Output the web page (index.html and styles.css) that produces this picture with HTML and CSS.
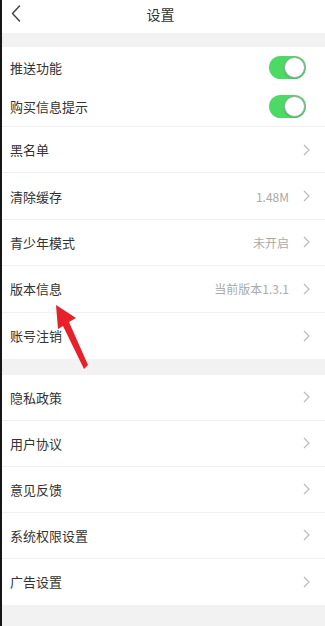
FILE: index.html
```html
<!DOCTYPE html>
<html lang="zh-CN">
<head>
<meta charset="utf-8">
<title>设置</title>
<link rel="stylesheet" href="styles.css">
</head>
<body>
<div class="page">
  <header class="nav">
    <svg class="back" width="10" height="17" viewBox="0 0 10 17"><path d="M8.5 1 L1.5 8.5 L8.5 16" fill="none" stroke="#444" stroke-width="1.5" stroke-linecap="round" stroke-linejoin="round"/></svg>
    <div class="title">设置</div>
  </header>
  <div class="gap gap-top"></div>
  <section class="group">
    <div class="row row-toggle"><span class="label">推送功能</span><span class="switch"><span class="knob"></span></span></div>
    <div class="row row-toggle row-last-toggle"><span class="label">购买信息提示</span><span class="switch"><span class="knob"></span></span></div>
    <div class="row"><span class="label">黑名单</span><span class="right"><svg class="chev" width="7" height="12" viewBox="0 0 7 12"><path d="M1 1 L6 6 L1 11" fill="none" stroke="#bbb" stroke-width="1.2"/></svg></span></div>
    <div class="row"><span class="label">清除缓存</span><span class="right"><span class="value">1.48M</span><svg class="chev" width="7" height="12" viewBox="0 0 7 12"><path d="M1 1 L6 6 L1 11" fill="none" stroke="#bbb" stroke-width="1.2"/></svg></span></div>
    <div class="row"><span class="label">青少年模式</span><span class="right"><span class="value">未开启</span><svg class="chev" width="7" height="12" viewBox="0 0 7 12"><path d="M1 1 L6 6 L1 11" fill="none" stroke="#bbb" stroke-width="1.2"/></svg></span></div>
    <div class="row"><span class="label">版本信息</span><span class="right"><span class="value">当前版本1.3.1</span><svg class="chev" width="7" height="12" viewBox="0 0 7 12"><path d="M1 1 L6 6 L1 11" fill="none" stroke="#bbb" stroke-width="1.2"/></svg></span></div>
    <div class="row row-end"><span class="label">账号注销</span><span class="right"><svg class="chev" width="7" height="12" viewBox="0 0 7 12"><path d="M1 1 L6 6 L1 11" fill="none" stroke="#bbb" stroke-width="1.2"/></svg></span></div>
  </section>
  <div class="gap gap-mid"></div>
  <section class="group">
    <div class="row row2"><span class="label">隐私政策</span><span class="right"><svg class="chev" width="7" height="12" viewBox="0 0 7 12"><path d="M1 1 L6 6 L1 11" fill="none" stroke="#bbb" stroke-width="1.2"/></svg></span></div>
    <div class="row row2"><span class="label">用户协议</span><span class="right"><svg class="chev" width="7" height="12" viewBox="0 0 7 12"><path d="M1 1 L6 6 L1 11" fill="none" stroke="#bbb" stroke-width="1.2"/></svg></span></div>
    <div class="row row2"><span class="label">意见反馈</span><span class="right"><svg class="chev" width="7" height="12" viewBox="0 0 7 12"><path d="M1 1 L6 6 L1 11" fill="none" stroke="#bbb" stroke-width="1.2"/></svg></span></div>
    <div class="row row2"><span class="label">系统权限设置</span><span class="right"><svg class="chev" width="7" height="12" viewBox="0 0 7 12"><path d="M1 1 L6 6 L1 11" fill="none" stroke="#bbb" stroke-width="1.2"/></svg></span></div>
    <div class="row row2 row-end"><span class="label">广告设置</span><span class="right"><svg class="chev" width="7" height="12" viewBox="0 0 7 12"><path d="M1 1 L6 6 L1 11" fill="none" stroke="#bbb" stroke-width="1.2"/></svg></span></div>
  </section>
  <div class="gap gap-bottom"></div>
  <svg class="arrow" width="325" height="626" viewBox="0 0 325 626"><polygon points="56,305 76,318 69,322 88,365 84,369 63,326 58,329" fill="#e8202a"/></svg>
</div>
</body>
</html>
```
FILE: styles.css
```css
html, body {
  margin: 0;
  padding: 0;
  background: #fff;
}
body {
  font-family: "Noto Sans CJK SC", "Noto Sans", sans-serif;
  color: #333;
}
.page {
  position: relative;
  width: 325px;
  height: 626px;
  overflow: hidden;
  box-sizing: border-box;
  border-left: 2px solid #161616;
  background: #f3f3f3;
  display: flex;
  flex-direction: column;
}
.nav {
  height: 33px;
  background: #fff;
  display: flex;
  align-items: center;
  justify-content: center;
  position: relative;
  flex-shrink: 0;
}
.back {
  position: absolute;
  left: 9px;
  top: 5px;
}
.title {
  font-size: 14px;
  color: #333;
  margin-top: -5px;
  margin-left: -6px;
}
.gap { flex-shrink: 0; background: #f2f2f2; }
.gap-top { height: 14px; }
.gap-mid { height: 16px; }
.gap-bottom { flex: 1; }
.group {
  background: #fff;
  display: flex;
  flex-direction: column;
  flex-shrink: 0;
}
.row {
  box-sizing: border-box;
  height: 46.4px;
  display: flex;
  align-items: center;
  justify-content: space-between;
  padding: 0 15px 0 8px;
  border-bottom: 1px solid #f0f0f0;
}
.row2 { height: 46px; }
.row-toggle {
  height: 40px;
  border-bottom: none;
  padding-right: 19px;
}
.row-last-toggle { border-bottom: 1px solid #f0f0f0; }
.row-end { border-bottom: none; }
.label {
  font-size: 13px;
  color: #333;
}
.right {
  display: flex;
  align-items: center;
}
.value {
  font-size: 12px;
  color: #aaa;
  margin-right: 14px;
}
.chev { display: block; }
.switch {
  width: 37px;
  height: 23px;
  border-radius: 12px;
  background: #4cd964;
  position: relative;
  box-sizing: border-box;
}
.knob {
  position: absolute;
  right: 1px;
  top: 1px;
  width: 21px;
  height: 21px;
  border-radius: 50%;
  background: #fff;
  box-sizing: border-box;
  border: 1px solid #9aa;
  box-shadow: 0 1px 2px rgba(0,0,0,0.15);
}
.arrow {
  position: absolute;
  left: -2px;
  top: 0;
  pointer-events: none;
}
```
